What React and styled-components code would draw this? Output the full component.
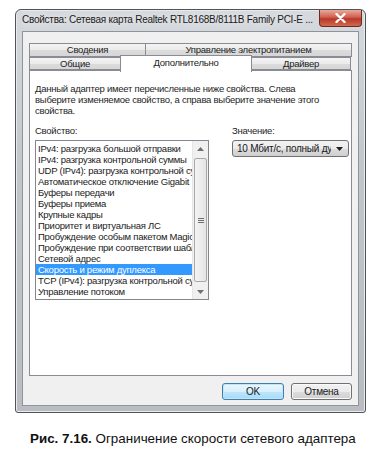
import React from 'react'
import styled, { createGlobalStyle } from 'styled-components'

const GlobalStyle = createGlobalStyle`
   body {
      margin: 0;
      background: #fff;
      font-family: 'Liberation Sans', Arial, sans-serif;
   }
`

const topTabs = [
   { label: 'Сводения', w: 117 },
   { label: 'Управление электропитанием', w: 207 },
]
const bottomTabs = [
   { label: 'Общие', w: 92 },
   { label: 'Дополнительно', w: 132, active: true },
   { label: 'Драйвер', w: 100 },
]
const properties = [
   'IPv4: разгрузка большой отправки',
   'IPv4: разгрузка контрольной суммы',
   'UDP (IPv4): разгрузка контрольной суммы',
   'Автоматическое отключение Gigabit',
   'Буферы передачи',
   'Буферы приема',
   'Крупные кадры',
   'Приоритет и виртуальная ЛС',
   'Пробуждение особым пакетом Magic Packet',
   'Пробуждение при соответствии шаблону',
   'Сетевой адрес',
   'Скорость и режим дуплекса',
   'TCP (IPv4): разгрузка контрольной суммы',
   'Управление потоком',
]

export default function App() {
   return (
      <Page>
         <GlobalStyle />
         <Window>
            <TitleBar>
               <Title>
                  Свойства: Сетевая карта Realtek RTL8168B/8111B Family PCI-E ...
               </Title>
               <CloseButton>
                  <svg width="11" height="10" viewBox="0 0 11 10">
                     <path
                        d="M1.5 1 L9.5 9 M9.5 1 L1.5 9"
                        stroke="#fff"
                        strokeWidth="2.4"
                        strokeLinecap="round"
                     />
                  </svg>
               </CloseButton>
            </TitleBar>
            <Client>
               <Tabs>
                  <TabRow>
                     {topTabs.map((t) => (
                        <Tab key={t.label} $w={t.w}>
                           {t.label}
                        </Tab>
                     ))}
                  </TabRow>
                  <TabRow>
                     {bottomTabs.map((t) => (
                        <Tab key={t.label} $w={t.w} $active={t.active}>
                           {t.label}
                        </Tab>
                     ))}
                  </TabRow>
               </Tabs>
               <Panel>
                  <Description>
                     Данный адаптер имеет перечисленные ниже свойства. Слева
                     <br />
                     выберите изменяемое свойство, а справа выберите значение этого
                     <br />
                     свойства.
                  </Description>
                  <Columns>
                     <LeftCol>
                        <Label>Свойство:</Label>
                        <ListBox>
                           <Items>
                              {properties.map((p, i) => (
                                 <Item key={p} $selected={i === 11}>
                                    {p}
                                 </Item>
                              ))}
                           </Items>
                           <ScrollBar>
                              <ArrowBtn>
                                 <svg width="7" height="4" viewBox="0 0 7 4">
                                    <path d="M0 4 L3.5 0 L7 4 Z" fill="#707070" />
                                 </svg>
                              </ArrowBtn>
                              <Track>
                                 <Thumb>
                                    <Grip />
                                    <Grip />
                                    <Grip />
                                 </Thumb>
                              </Track>
                              <ArrowBtn>
                                 <svg width="7" height="4" viewBox="0 0 7 4">
                                    <path d="M0 0 L3.5 4 L7 0 Z" fill="#707070" />
                                 </svg>
                              </ArrowBtn>
                           </ScrollBar>
                        </ListBox>
                     </LeftCol>
                     <RightCol>
                        <Label>Значение:</Label>
                        <Select>
                           <SelectText>10 Мбит/с, полный дуплекс</SelectText>
                           <svg width="7" height="4" viewBox="0 0 7 4">
                              <path d="M0 0 L3.5 4 L7 0 Z" fill="#202020" />
                           </svg>
                        </Select>
                     </RightCol>
                  </Columns>
               </Panel>
               <Buttons>
                  <Button $primary>OK</Button>
                  <Button>Отмена</Button>
               </Buttons>
            </Client>
         </Window>
         <Caption>
            <b>Рис. 7.16.</b> Ограничение скорости сетевого адаптера
         </Caption>
      </Page>
   )
}

const Page = styled('div')(() => ({
   width: '380px',
   height: '450px',
   paddingTop: '9px',
   boxSizing: 'border-box',
}))
const Window = styled('div')(() => ({
   marginLeft: '15px',
   width: '351px',
   boxSizing: 'border-box',
   border: '1px solid #4e545b',
   borderRadius: '6px 6px 3px 3px',
   background: 'linear-gradient(180deg, #d6d9dd 0%, #c2c6cb 40%, #b9bdc2 100%)',
   padding: '0 6px 6px',
   boxShadow: 'inset 0 0 0 1px #e8eaec',
   fontSize: '9.5px',
   letterSpacing: '-0.25px',
   color: '#1e1e1e',
}))
const TitleBar = styled('div')(() => ({
   height: '21px',
   display: 'flex',
   justifyContent: 'space-between',
   alignItems: 'flex-start',
   gap: '4px',
}))
const Title = styled('div')(() => ({
   fontSize: '10px',
   lineHeight: '20px',
   color: '#1a1a1a',
   whiteSpace: 'nowrap',
   overflow: 'hidden',
   textShadow: '0 0 6px #fff',
}))
const CloseButton = styled('div')(() => ({
   flex: '0 0 43px',
   height: '17px',
   marginRight: '-3px',
   display: 'flex',
   alignItems: 'center',
   justifyContent: 'center',
   border: '1px solid #6e2a24',
   borderTop: 'none',
   borderRadius: '0 0 4px 4px',
   background: 'linear-gradient(180deg, #e9a99c 0%, #d0604f 45%, #b8382a 55%, #cf6b4f 100%)',
   boxSizing: 'border-box',
}))
const Client = styled('div')(() => ({
   background: '#f0f0f0',
   border: '1px solid #8d949b',
   padding: '11px 6px 5px',
}))
const Tabs = styled('div')(() => ({
   display: 'flex',
   flexDirection: 'column',
}))
const TabRow = styled('div')(() => ({
   display: 'flex',
   height: '13px',
   '&:first-child': {
      height: '14px',
   },
}))
const Tab = styled('div')(({ $w, $active }) => ({
   width: `${$w}px`,
   boxSizing: 'border-box',
   border: '1px solid #898c95',
   borderBottom: $active ? 'none' : '1px solid #898c95',
   marginLeft: '-1px',
   lineHeight: $active ? '14px' : '11px',
   textAlign: 'center',
   color: '#222',
   background: $active
      ? '#fff'
      : 'linear-gradient(180deg, #f3f3f3 0%, #ebebeb 50%, #dcdcdc 51%, #d6d6d6 100%)',
   height: $active ? '17px' : 'auto',
   marginTop: $active ? '-2px' : '0',
   position: 'relative',
   zIndex: $active ? 2 : 1,
   '&:first-child': {
      marginLeft: 0,
   },
}))
const Panel = styled('div')(() => ({
   height: '306px',
   boxSizing: 'border-box',
   background: '#fff',
   border: '1px solid #898c95',
   padding: '12px 5px 0',
}))
const Description = styled('div')(() => ({
   lineHeight: '11px',
   whiteSpace: 'nowrap',
}))
const Columns = styled('div')(() => ({
   display: 'flex',
   gap: '23px',
   marginTop: '9px',
}))
const LeftCol = styled('div')(() => ({
   width: '174px',
   display: 'flex',
   flexDirection: 'column',
}))
const RightCol = styled('div')(() => ({
   width: '117px',
   display: 'flex',
   flexDirection: 'column',
}))
const Label = styled('div')(() => ({
   lineHeight: '12px',
   marginBottom: '3px',
}))
const ListBox = styled('div')(() => ({
   height: '160px',
   boxSizing: 'border-box',
   border: '1px solid #828790',
   display: 'flex',
   background: '#fff',
}))
const Items = styled('div')(() => ({
   flex: 1,
   minWidth: 0,
   paddingTop: '2px',
   overflow: 'hidden',
}))
const Item = styled('div')(({ $selected }) => ({
   lineHeight: '11px',
   height: '11px',
   paddingLeft: '2px',
   whiteSpace: 'nowrap',
   overflow: 'hidden',
   color: $selected ? '#fff' : '#1a1a1a',
   background: $selected ? '#3399ff' : 'transparent',
}))
const ScrollBar = styled('div')(() => ({
   width: '15px',
   display: 'flex',
   flexDirection: 'column',
   background: '#f0f0f0',
   borderLeft: '1px solid #e6e6e6',
}))
const ArrowBtn = styled('div')(() => ({
   height: '15px',
   display: 'flex',
   alignItems: 'center',
   justifyContent: 'center',
}))
const Track = styled('div')(() => ({
   flex: 1,
   padding: '2px 1px',
   display: 'flex',
}))
const Thumb = styled('div')(() => ({
   flex: 1,
   border: '1px solid #a8a8a8',
   borderRadius: '2px',
   background: 'linear-gradient(90deg, #f4f4f4, #e4e4e4)',
   display: 'flex',
   flexDirection: 'column',
   alignItems: 'center',
   justifyContent: 'center',
   gap: '1px',
}))
const Grip = styled('div')(() => ({
   width: '6px',
   height: '1px',
   background: '#707070',
}))
const Select = styled('div')(() => ({
   height: '17px',
   boxSizing: 'border-box',
   border: '1px solid #707070',
   borderRadius: '3px',
   background: 'linear-gradient(180deg, #f2f2f2 0%, #ebebeb 50%, #dddddd 51%, #cfcfcf 100%)',
   display: 'flex',
   alignItems: 'center',
   padding: '0 5px 0 4px',
   gap: '5px',
}))
const SelectText = styled('div')(() => ({
   flex: 1,
   fontSize: '10px',
   whiteSpace: 'nowrap',
   overflow: 'hidden',
   color: '#1a1a1a',
}))
const Buttons = styled('div')(() => ({
   display: 'flex',
   justifyContent: 'flex-end',
   gap: '7px',
   marginTop: '7px',
}))
const Button = styled('div')(({ $primary }) => ({
   width: $primary ? '62px' : '61px',
   height: '17px',
   boxSizing: 'border-box',
   border: `1px solid ${$primary ? '#3c7fb1' : '#707070'}`,
   borderRadius: '3px',
   fontSize: '10px',
   lineHeight: '15px',
   textAlign: 'center',
   color: '#1a1a1a',
   background: $primary
      ? 'linear-gradient(180deg, #eaf6fd 0%, #d9f0fc 50%, #bee6fd 51%, #a7d9f5 100%)'
      : 'linear-gradient(180deg, #f2f2f2 0%, #ebebeb 50%, #dddddd 51%, #cfcfcf 100%)',
   boxShadow: $primary ? 'inset 0 0 0 1px #c4e5f6' : 'inset 0 0 0 1px #fafafa',
}))
const Caption = styled('div')(() => ({
   marginTop: '18px',
   fontSize: '13.4px',
   lineHeight: '16px',
   color: '#111',
   paddingLeft: '30px',
   whiteSpace: 'nowrap',
}))
